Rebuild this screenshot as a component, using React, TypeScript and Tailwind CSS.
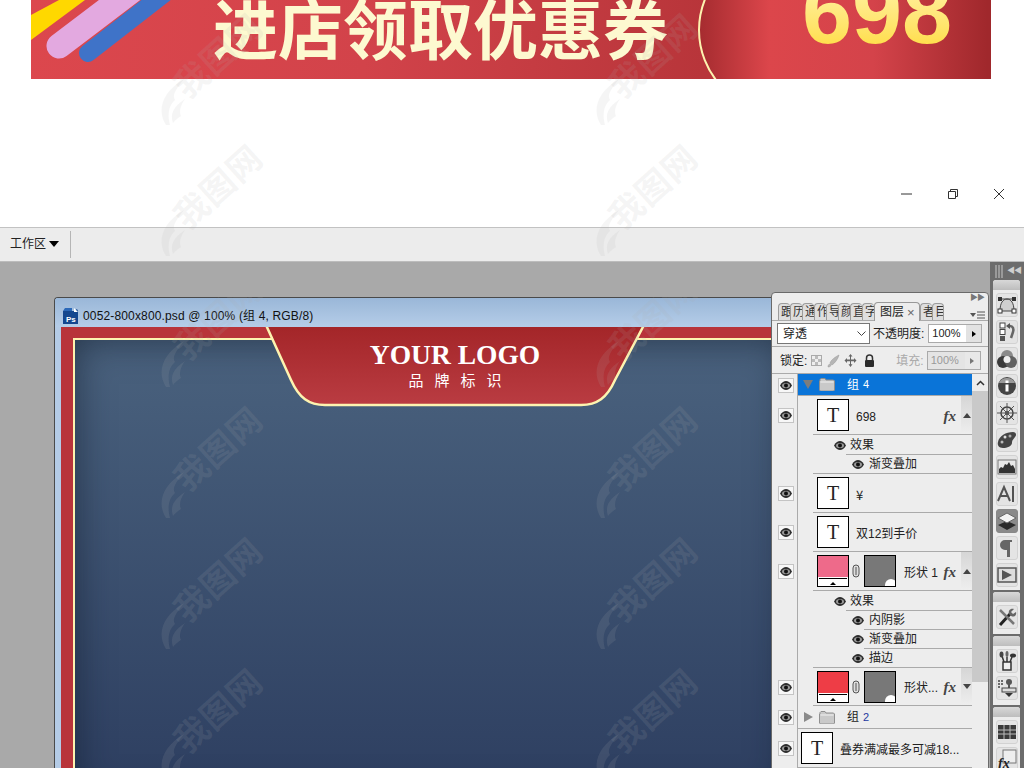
import React from "react";

type Row =
  | { kind: "group"; name: string; num: string; open?: boolean; active?: boolean; h: string }
  | { kind: "layer"; name: React.ReactNode; thumb: string; fx?: boolean; arrow?: "up" | "down"; h: string; wide?: boolean }
  | { kind: "fxhead" }
  | { kind: "fx"; name: string };

const rows: Row[] = [
  { kind: "group", name: "组", num: "4", open: true, active: true, h: "h-[22px]" },
  { kind: "layer", name: "698", thumb: "T", fx: true, arrow: "up", h: "h-[39px]" },
  { kind: "fxhead" },
  { kind: "fx", name: "渐变叠加" },
  { kind: "layer", name: <span className="[font-family:'Noto_Sans_CJK_SC',sans-serif] text-[13px]">¥</span>, thumb: "T", h: "h-[39px]" },
  { kind: "layer", name: "双12到手价", thumb: "T", h: "h-[39px]" },
  { kind: "layer", name: "形状 1", thumb: "#ee6a8a", fx: true, arrow: "up", h: "h-[39px]" },
  { kind: "fxhead" },
  { kind: "fx", name: "内阴影" },
  { kind: "fx", name: "渐变叠加" },
  { kind: "fx", name: "描边" },
  { kind: "layer", name: "形状...", thumb: "#ee3d46", fx: true, arrow: "down", h: "h-[38px]" },
  { kind: "group", name: "组", num: "2", h: "h-[23px]" },
  { kind: "layer", name: "叠券满减最多可减18...", thumb: "T", h: "h-[39px]", wide: true },
];

function Eye() {
  return (
    <span className="flex h-[15px] w-[16px] items-center justify-center border border-[#c4c4c4] bg-[#f7f7f7]">
      <EyeGlyph />
    </span>
  );
}

function EyeGlyph() {
  return (
    <svg width="12" height="9" viewBox="0 0 12 9" className="shrink-0">
      <path d="M0 4.500C2 1 4 0 6 0s4 1 6 4.500C10 8 8 9 6 9S2 8 0 4.500z" fill="#2e2e2e" />
      <ellipse cx="6" cy="4.500" rx="4" ry="2.600" fill="#9a9a9a" />
      <circle cx="6" cy="4.500" r="2" fill="#111" />
    </svg>
  );
}

function Folder() {
  return (
    <svg width="16" height="13" viewBox="0 0 16 13">
      <path d="M1 3V1.500L2 .5h4l1 1.500h7.500l1 1v9l-1 1H1.500l-1-1V3z" fill="#c9c9c9" stroke="#8f8f8f" />
      <path d="M1.500 4h13" stroke="#f1f1f1" />
    </svg>
  );
}

function Fx() {
  return <span className="[font-family:'Liberation_Serif',serif] text-[15px] font-bold italic leading-none text-[#444]">fx</span>;
}

function Thumb({ fill }: { fill: string }) {
  if (fill === "T") {
    return (
      <span className="flex h-[32px] w-[32px] shrink-0 items-center justify-center border border-black bg-white [font-family:'Liberation_Serif',serif] text-[20px] leading-none text-[#222]">
        T
      </span>
    );
  }
  return (
    <span className="flex items-center">
      <span className="flex h-[32px] w-[32px] shrink-0 flex-col border border-black bg-white">
        <span className="h-[21px]" style={{ backgroundColor: fill }} />
        <span className="mx-[1px] mt-[1px] flex h-[7px] items-end justify-center border-t border-black">
          <span className="h-0 w-0 border-x-[3px] border-b-[3px] border-x-transparent border-b-black" />
        </span>
      </span>
      <svg width="8" height="14" viewBox="0 0 8 14" className="ml-[3px] mr-[4px]">
        <rect x="1" y="1" width="6" height="12" rx="3" fill="#ddd" stroke="#555" />
        <path d="M4 3v8" stroke="#555" />
      </svg>
      <span className="relative h-[32px] w-[32px] shrink-0 overflow-hidden border border-black bg-[#787878]">
        <span className="absolute bottom-[-4px] right-[-2px] h-[11px] w-[12px] rounded-t-full bg-white" />
      </span>
    </span>
  );
}

function LayerRow({ row, next }: { row: Row; next?: Row }) {
  if (row.kind === "group") {
    return (
      <div className={`flex ${row.h}`}>
        <EyeCell show />
        <div className={`flex flex-1 items-center border-b border-[#aaa] pl-[5px] ${row.active ? "bg-[#0a74d8] text-white" : "text-[#222]"}`}>
          {row.open ? (
            <span className="h-0 w-0 border-x-[5px] border-t-[9px] border-x-transparent border-t-[#7d7d7d]" />
          ) : (
            <span className="ml-[1px] h-0 w-0 border-y-[5px] border-l-[9px] border-y-transparent border-l-[#8a8a8a]" />
          )}
          <span className="ml-[6px] flex"><Folder /></span>
          <span className="ml-[12px] text-[12px]">{row.name}</span>
          <span className={`ml-[4px] text-[11px] ${row.active ? "" : "text-[#2438a0]"}`}>{row.num}</span>
        </div>
      </div>
    );
  }
  if (row.kind === "layer") {
    return (
      <div className={`flex ${row.h}`}>
        <EyeCell show />
        <div className={`flex flex-1 items-center border-b border-[#aaa] ${row.wide ? "pl-[3px]" : "ml-[15px] pl-[4px]"}`}>
          <Thumb fill={row.thumb} />
          <span className={`mt-[3px] truncate text-[12px] text-[#222] ${row.thumb === "T" ? "ml-[7px]" : "ml-[8px]"}`}>{row.name}</span>
          {row.arrow && (
            <span className="ml-auto flex h-full items-center">
              {row.fx && <span className="mt-[2px] flex"><Fx /></span>}
              <span className="ml-[5px] flex h-full w-[11px] items-center justify-center bg-gradient-to-b from-[#d6d6d6] to-[#eeeeee]">
                {row.arrow === "up" && <span className="h-0 w-0 border-x-[4px] border-b-[5px] border-x-transparent border-b-[#444]" />}
                {row.arrow === "down" && <span className="h-0 w-0 border-x-[4px] border-t-[5px] border-x-transparent border-t-[#444]" />}
              </span>
            </span>
          )}
        </div>
      </div>
    );
  }
  if (row.kind === "fxhead") {
    return (
      <div className="flex h-[20px]">
        <EyeCell />
        <div className="ml-[36px] flex flex-1 items-center">
          <EyeGlyph />
          <span className="flex h-full flex-1 items-center border-b border-[#aaa] pl-[4px] text-[12px] text-[#222]">效果</span>
        </div>
      </div>
    );
  }
  // the last effect of a layer closes with a line running back to the thumbnail column
  const last = next?.kind !== "fx";
  return (
    <div className="flex h-[19px]">
      <EyeCell />
      <div className="relative ml-[54px] flex flex-1 items-center">
        <EyeGlyph />
        <span className={`flex h-full flex-1 items-center border-b border-[#aaa] pl-[5px] text-[12px] text-[#222] ${last ? "border-transparent" : ""}`}>{row.name}</span>
        {last && <span className="absolute bottom-0 left-[-39px] right-0 h-[1px] bg-[#aaa]" />}
      </div>
    </div>
  );
}

function EyeCell({ show }: { show?: boolean }) {
  return (
    <div className="flex w-[25px] shrink-0 items-center justify-center border-r border-[#aaa] pl-[1px]">
      {show && <Eye />}
    </div>
  );
}

function Tab({ label, last }: { label: string; last?: boolean }) {
  return (
    <span className={`flex h-[17px] w-[12px] items-center overflow-hidden rounded-t-[4px] border-l border-t border-[#9c9c9c] bg-[#dedede] pl-[2px] text-[12px] text-[#333] ${last ? "border-r" : ""}`}>
      <span className="shrink-0">{label}</span>
    </span>
  );
}

function LayersPanel() {
  const tabs = ["跟", "历", "通", "作", "导", "颜", "直", "字"];
  return (
    <div className="absolute left-[771px] top-[30px] h-[480px] w-[218px] rounded-t-[4px] border border-[#6a6a6a] bg-[#ededed]">
      <div className="flex h-[9px] items-center justify-end pr-[4px] text-[8px] leading-none tracking-[-1px] text-[#777]">▶▶</div>
      {/* tab strip */}
      <div className="flex h-[19px] items-end border-b border-[#aaa] pl-[6px]">
        {tabs.map((t) => (
          <Tab key={t} label={t} />
        ))}
        <span className="z-10 mb-[-1px] flex h-[19px] w-[46px] shrink-0 items-center rounded-t-[4px] border-x border-t border-[#999] bg-[#ededed] pl-[5px] text-[12px] text-[#222]">
          图层<span className="ml-[3px] text-[13px] leading-none text-[#666]">×</span>
        </span>
        <Tab label="者" />
        <Tab label="目" last />
        <span className="mb-[1px] ml-auto mr-[3px] flex items-center">
          <span className="h-0 w-0 border-x-[3px] border-t-[4px] border-x-transparent border-t-[#555]" />
          <svg width="8" height="8" viewBox="0 0 8 8" className="ml-[1px]"><path d="M0 1h8M0 4h8M0 7h8" stroke="#555" /></svg>
        </span>
      </div>
      {/* blend mode and opacity */}
      <div className="flex h-[26px] items-center border-b border-[#aaa] pl-[5px] text-[12px] text-[#222]">
        <span className="flex h-[21px] w-[93px] items-center justify-between border border-[#777] bg-white pl-[5px] pr-[3px]">
          穿透
          <svg width="9" height="6" viewBox="0 0 9 6"><path d="M.5.5l4 4 4-4" fill="none" stroke="#444" /></svg>
        </span>
        <span className="ml-[3px]">不透明度:</span>
        <span className="ml-[4px] flex h-[19px] w-[54px] border border-[#aaa]">
          <span className="flex w-[37px] items-center bg-white pl-[3px] text-[11px]">100%</span>
          <span className="flex flex-1 items-center justify-center bg-[#e2e2e2]"><span className="h-0 w-0 border-y-[3px] border-l-[4px] border-y-transparent border-l-black" /></span>
        </span>
      </div>
      {/* lock row */}
      <div className="flex h-[27px] items-center border-b border-[#aaa] pl-[8px] pt-[1px] text-[12px] text-[#222]">
        锁定:
        <span className="ml-[4px] h-[11px] w-[11px] border border-[#aaa] bg-[conic-gradient(#bbb_25%,#eee_0_50%,#bbb_0_75%,#eee_0)] bg-[length:6px_6px]" />
        <svg width="13" height="14" viewBox="0 0 13 14" className="ml-[5px]"><path d="M12 1C8 3 4 6 3 9l2 2c3-2 6-6 7-10zM3 10c-1 0-2 1-2 3 2 0 3-1 3-2z" fill="#b5b5b5" stroke="#999" strokeWidth=".5" /></svg>
        <svg width="13" height="13" viewBox="0 0 13 13" className="ml-[4px]"><path d="M6.500 0l2 2.500h-1.500v3h3V4l2.500 2.500L10 9V7.200H7v3h1.500l-2 2.800-2-2.800H6v-3H3V9L.5 6.500 3 4v1.500h3v-3H4.500z" fill="#666" /></svg>
        <svg width="11" height="13" viewBox="0 0 11 13" className="ml-[7px]"><path d="M2.500 6V4a3 3 0 016 0v2" fill="none" stroke="#333" strokeWidth="1.500" /><rect x="1" y="6" width="9" height="7" rx="1" fill="#2b2b2b" /></svg>
        <span className="ml-[21px] text-[#aaa]">填充:</span>
        <span className="ml-[3px] flex h-[19px] w-[54px] border border-[#aaa] text-[#999]">
          <span className="flex w-[37px] items-center bg-[#e4e4e4] pl-[3px] text-[11px]">100%</span>
          <span className="flex flex-1 items-center justify-center bg-[#e8e8e8]"><span className="h-0 w-0 border-y-[3px] border-l-[4px] border-y-transparent border-l-[#777]" /></span>
        </span>
      </div>
      {/* layer list with scrollbar */}
      <div className="flex pl-[1px]">
        <div className="w-[199px]">
          {rows.map((r, i) => (
            <LayerRow key={i} row={r} next={rows[i + 1]} />
          ))}
        </div>
        <div className="w-[16px]">
          <div className="flex h-[17px] items-center justify-center">
            <svg width="9" height="6" viewBox="0 0 9 6"><path d="M1 5l3.500-3.500L8 5" fill="none" stroke="#333" strokeWidth="1.500" /></svg>
          </div>
          <div className="h-[291px] bg-[#c9c9c9]" />
        </div>
      </div>
    </div>
  );
}

// one glyph per dock button, all on a 20x20 box
const dockIcons: Record<string, React.ReactNode> = {
  path: (
    <>
      <path d="M3 16C3 8 6 4 10 4s7 4 7 12z" fill="#cfcfcf" stroke="#444" />
      <path d="M3 4h14" stroke="#444" />
      <rect x="1" y="2" width="4" height="4" fill="#333" /><rect x="15" y="2" width="4" height="4" fill="#333" />
      <rect x="1" y="14" width="4" height="4" fill="#fff" stroke="#333" /><rect x="15" y="14" width="4" height="4" fill="#fff" stroke="#333" />
    </>
  ),
  history: (
    <>
      <rect x="3" y="1" width="5" height="5" fill="#fff" stroke="#444" /><rect x="3" y="7.500" width="5" height="5" fill="#fff" stroke="#444" /><rect x="3" y="14" width="5" height="5" fill="#555" />
      <path d="M11 4h2c3 0 4 3 3 6l-2 6" fill="none" stroke="#666" strokeWidth="2.500" /><path d="M9 4l4-3v6z" fill="#555" />
    </>
  ),
  color: (
    <>
      <circle cx="10" cy="7" r="6" fill="#8a8a8a" /><circle cx="6" cy="13" r="6" fill="#3a3a3a" /><circle cx="14" cy="13" r="6" fill="#606060" /><circle cx="10" cy="10.500" r="3.500" fill="#eee" />
    </>
  ),
  info: (
    <>
      <circle cx="10" cy="10" r="9" fill="#444" /><path d="M10 2a8 6 0 018 5H2a8 6 0 018-5z" fill="#9a9a9a" />
      <rect x="8.500" y="8.500" width="3" height="7" fill="#fff" /><rect x="8.500" y="4.500" width="3" height="2.500" fill="#fff" />
    </>
  ),
  wheel: (
    <>
      <circle cx="10" cy="10" r="6" fill="none" stroke="#444" strokeWidth="1.500" /><circle cx="10" cy="10" r="2" fill="#444" />
      <path d="M10 0v20M0 10h20M3 3l14 14M17 3L3 17" stroke="#555" />
    </>
  ),
  palette: (
    <>
      <path d="M1 12C2 6 9 2 16 2c3 0 4 3 2 5-2 3-3 3-3 6s-5 5-9 5-6-3-5-6z" fill="#444" />
      <circle cx="8" cy="7" r="1.500" fill="#ddd" /><circle cx="13" cy="6" r="1.500" fill="#aaa" /><circle cx="5" cy="12" r="1.500" fill="#bbb" />
    </>
  ),
  histo: (
    <>
      <rect x="1" y="3" width="18" height="14" fill="#e8e8e8" stroke="#777" />
      <path d="M2 16V12l2-2 2 1 2-4 2 1 2-3 2 4 2-1 2 4v4z" fill="#333" />
    </>
  ),
  char: (
    <>
      <path d="M1 17L7 3l6 14M3.500 12h7" fill="none" stroke="#555" strokeWidth="2" /><path d="M16 2v16" stroke="#222" strokeWidth="1.500" />
    </>
  ),
  layers: (
    <>
      <path d="M10 10l9 4-9 5-9-5z" fill="#2a2a2a" /><path d="M10 2l9 5-9 5-9-5z" fill="#f3f3f3" stroke="#666" />
    </>
  ),
  para: <path d="M15 2H8a5 5 0 000 10h2v7h3V4h2z" fill="#666" />,
  play: (
    <>
      <rect x="1" y="3" width="18" height="14" fill="#ddd" stroke="#555" strokeWidth="1.500" /><path d="M5 5l10 5-10 5z" fill="#555" />
    </>
  ),
  tools: (
    <>
      <path d="M3 18L13 7" stroke="#222" strokeWidth="3" /><path d="M3 3l14 14" stroke="#777" strokeWidth="2.500" /><path d="M12 7c-1-3 1-6 5-5l-3 3 2 2 3-2c1 4-3 7-7 2z" fill="#666" />
    </>
  ),
  brushes: (
    <>
      <path d="M6 11h8v8H6z" fill="#eee" stroke="#333" strokeWidth="1.500" />
      <path d="M7 11L5 5M10 11V6M13 11l2-5" stroke="#333" strokeWidth="1.500" />
      <ellipse cx="4.500" cy="3.500" rx="2" ry="3" fill="#444" /><ellipse cx="10" cy="3" rx="1.500" ry="3" fill="#666" /><ellipse cx="16" cy="4.500" rx="3" ry="2" fill="#333" />
    </>
  ),
  stamp: (
    <>
      <circle cx="12" cy="4" r="3" fill="#555" /><path d="M11 6h2v5h-2z" fill="#555" /><rect x="5" y="10" width="14" height="4" fill="#ddd" stroke="#444" /><path d="M8 15h8l-4 4z" fill="#333" />
      <path d="M1 3h5M1 6h5M1 9h3" stroke="#444" strokeWidth="1.500" strokeDasharray="2 1" />
    </>
  ),
  swatches: (
    <>
      <rect x="1" y="3" width="18" height="14" fill="#3a3a3a" />
      <path d="M7 3v14M13 3v14M1 8h18M1 12h18" stroke="#bbb" />
    </>
  ),
  styles: (
    <>
      <rect x="6" y="1" width="13" height="13" fill="#eee" stroke="#777" />
      <text x="1" y="19" fontFamily="'Liberation Serif', serif" fontStyle="italic" fontWeight="700" fontSize="14" fill="#222">fx</text>
    </>
  ),
};

function DockButton({ name, active }: { name: string; active?: boolean }) {
  return (
    <div className={`mx-auto flex h-[24px] w-[22px] items-center justify-center rounded-[3px] border ${active ? "border-[#888] bg-[#8a8a8a]" : "border-[#d2d2d2] bg-[#e4e4e4]"}`}>
      <svg width="20" height="20" viewBox="0 0 20 20">{dockIcons[name]}</svg>
    </div>
  );
}

function Dock() {
  const groups = [
    { h: "h-[310px]", items: ["path", "history", "color", "info", "wheel", "palette", "histo", "char", "layers", "para", "play"] },
    { h: "h-[42px]", items: ["tools"] },
    { h: "h-[69px]", items: ["brushes", "stamp"] },
    { h: "h-[70px]", items: ["swatches", "styles"] },
  ];
  return (
    <div className="absolute left-[990px] top-0 h-[506px] w-[34px] bg-[#6c6c6c]">
      <div className="flex h-[18px] items-center justify-between pl-[5px] pr-[3px] text-[8px] leading-none text-[#cfcfcf]">
        <svg width="9" height="13" viewBox="0 0 9 13"><path d="M1 0v13M4 0v13M7 0v13" stroke="#a9a9a9" strokeWidth="1.500" /></svg>
        <span className="tracking-[-1px]">◀◀</span>
      </div>
      <div className="flex flex-col gap-[2px] pl-[3px] pr-[4px]">
        {groups.map((g) => (
          <div key={g.items[0]} className={`${g.h} overflow-hidden rounded-t-[3px] bg-[#ececec]`}>
            <div className="mb-[3px] h-[10px] bg-gradient-to-b from-[#d8d8d8] to-[#bdbdbd]" />
            <div className="flex flex-col gap-[3px]">
              {g.items.map((n) => (
                <DockButton key={n} name={n} active={n === "layers"} />
              ))}
            </div>
          </div>
        ))}
      </div>
    </div>
  );
}

function DocumentWindow() {
  return (
    <div className="absolute left-[54px] top-[35px] h-[480px] w-[731px] overflow-hidden rounded-t-[4px] border-l border-t border-[#4a4a4a] bg-[#b4cbe6]">
      <div className="flex h-[29px] items-end bg-gradient-to-b from-[#9ab7d8] to-[#b5cde8] pb-[2px] pl-[7px] text-[12px] text-[#111]">
        <svg width="17" height="17" viewBox="0 0 17 17">
          <path d="M1 3h11l3-2 1 2v13H1z" fill="#14478f" />
          <path d="M1 3h9V0H3z" fill="#2b68b8" />
          <path d="M12 0l4 4h-4z" fill="#fff" />
          <text x="4" y="14" fontFamily="'Liberation Sans', sans-serif" fontWeight="700" fontSize="8" fill="#fff">Ps</text>
        </svg>
        <span className="ml-[4px] tracking-[0.15px]">0052-800x800.psd @ 100% (组 4, RGB/8)</span>
      </div>
      <div className="relative ml-[6px] h-full bg-[#b8343a] pl-[12px] pt-[11px]">
        <div className="h-[460px] border-l-2 border-t-2 border-[#fdf3b0] bg-[linear-gradient(180deg,#4a627e_0%,#2d3e60_100%)] shadow-[inset_0_0_36px_rgba(15,25,40,0.6)]" />
        <svg width="384" height="82" viewBox="0 0 384 82" className="absolute left-[202px] top-0">
          <defs>
            <linearGradient id="logoTab" x1="0" y1="0" x2="0" y2="1">
              <stop offset="0" stopColor="#a32528" />
              <stop offset="1" stopColor="#ba3c42" />
            </linearGradient>
          </defs>
          <path d="M3 -2L28 53C36 71 46 78 62 78H318C334 78 344 71 352 53L381 -2z" fill="url(#logoTab)" stroke="#fdf3b0" strokeWidth="2.500" />
        </svg>
        <div className="absolute left-[204px] top-[12px] flex w-[380px] flex-col items-center text-white">
          <span className="[font-family:'Liberation_Serif',serif] text-[27.500px] font-bold leading-[32px]">YOUR LOGO</span>
          <span className="mt-[1px] pl-[11px] text-[15px] leading-[18px] tracking-[11px]">品牌标识</span>
        </div>
      </div>
    </div>
  );
}

function Banner() {
  return (
    <div className="relative ml-[31px] h-[79px] w-[960px] overflow-hidden bg-[linear-gradient(95deg,#dc474d_0%,#d2434a_35%,#b8353a_70%)]">
      <svg width="200" height="79" viewBox="0 0 200 79" className="absolute left-0 top-0">
        <path d="M0 40L54 0H28L0 15z" fill="#ffd800" />
        <path d="M57 53L143 -14" stroke="#3f73c8" strokeWidth="18" strokeLinecap="round" />
        <path d="M28 46L107 -14" stroke="#e3a9e0" strokeWidth="25" strokeLinecap="round" />
      </svg>
      <div className="absolute left-[182px] top-[-2px] whitespace-nowrap text-[65px] font-bold leading-[68px] text-[#fdf9d0]">进店领取优惠券</div>
      <div className="absolute left-[667px] top-[-53px] h-[166px] w-[500px] rounded-full border-2 border-[#fdf3b0] bg-[linear-gradient(90deg,#a62c30_0%,#dc464b_14%,#d4434a_35%,#a0282c_58%)]" />
      <div className="absolute left-[771px] top-[-38px] bg-gradient-to-b from-[#fff7b8] to-[#ffd91e] bg-clip-text text-[90px] font-bold leading-[100px] text-transparent">698</div>
    </div>
  );
}

function Watermark() {
  return (
    <div className="relative h-[100px] w-[100px]">
      <svg width="26" height="46" viewBox="0 0 26 46" className="absolute left-0 top-[70px]" fill="rgba(175,175,175,0.13)">
        <path d="M6 46C-3 32 1 14 24 0C15 11 12 17 15 21C9 26 7 35 10 46z" />
        <path d="M13 44C10 35 13 28 25 20C20 27 19 33 21 37C18 39 15 41 13 44z" />
      </svg>
      <span className="absolute left-[6px] top-[30px] block -rotate-[42deg] whitespace-nowrap text-[34px] font-bold leading-none tracking-[1px] text-[rgba(175,175,175,0.13)]">我图网</span>
    </div>
  );
}

export default function App() {
  return (
    <div className="relative flex h-[768px] w-[1024px] flex-col overflow-hidden bg-white [font-family:'Liberation_Sans','Noto_Sans_CJK_SC',sans-serif]">
      <Banner />
      <div className="flex h-[148px] items-end justify-end pb-[27px] pr-[19px]">
        <div className="flex items-center gap-[34px]">
          <svg width="12" height="12" viewBox="0 0 12 12"><path d="M0 6h11" stroke="#333" /></svg>
          <svg width="12" height="12" viewBox="0 0 12 12" fill="none" stroke="#333"><path d="M1.500 3.500h7v7h-7zM3.500 3.500v-2h7v7h-2" /></svg>
          <svg width="12" height="12" viewBox="0 0 12 12"><path d="M1 1l10 10M11 1L1 11" stroke="#333" /></svg>
        </div>
      </div>
      <div className="flex h-[35px] items-center border-b border-t border-b-[#bcbcbc] border-t-[#c2c2c2] bg-[#ececec] pb-[1px] pl-[10px] text-[12px] text-[#222]">
        工作区
        <span className="ml-[3px] h-0 w-0 border-x-[5px] border-t-[6px] border-x-transparent border-t-black" />
        <span className="ml-[11px] h-[27px] w-[1px] bg-[#b5b5b5]" />
      </div>
      <div className="relative flex-1 bg-[#a9a9a9]">
        <DocumentWindow />
        <LayersPanel />
        <Dock />
      </div>
      {/* site watermark tiled over everything */}
      <div className="pointer-events-none absolute inset-0 grid grid-cols-[100px_100px] grid-rows-[repeat(6,100px)] gap-x-[335px] gap-y-[31px] pl-[160px] pt-[9px]">
        {Array.from({ length: 12 }).map((_, i) => (
          <Watermark key={i} />
        ))}
      </div>
    </div>
  );
}
